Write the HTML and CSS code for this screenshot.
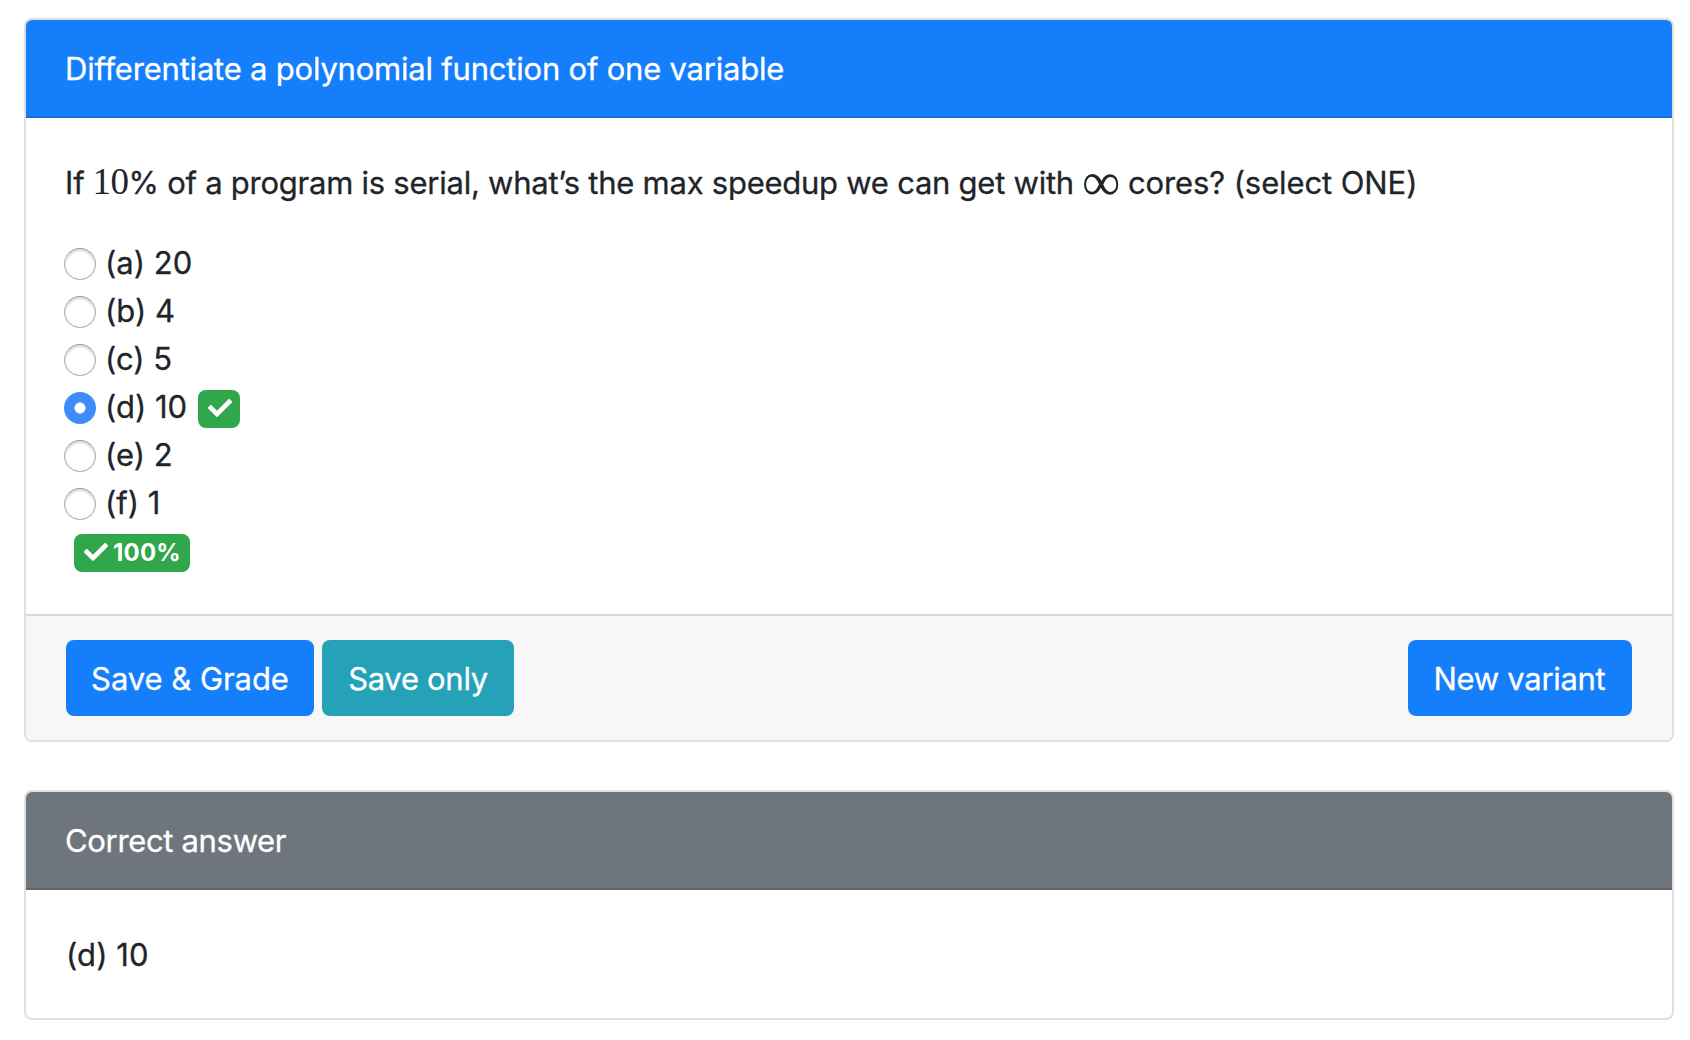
FILE: index.html
```html
<!DOCTYPE html>
<html lang="en">
<head>
<meta charset="utf-8">
<title>Differentiate a polynomial function of one variable</title>
<link rel="stylesheet" href="styles.css">
</head>
<body>
<main class="page">
  <section class="card">
    <header class="card-header primary"><span class="title">Differentiate a polynomial function of one variable</span></header>
    <div class="card-body">
      <p class="prompt">If <span class="math">10</span><span class="mid">% of a program is serial, what’s the max speedup we can get with</span><span class="math infinity">∞</span><span class="end">cores? (select ONE)</span></p>
      <div class="options">
        <label class="option"><input type="radio" name="answer"><span>(a) 20</span></label>
        <label class="option"><input type="radio" name="answer"><span>(b) 4</span></label>
        <label class="option"><input type="radio" name="answer"><span>(c) 5</span></label>
        <label class="option"><input type="radio" name="answer" checked><span>(d) 10</span>
          <span class="badge badge-mark"><svg class="check" viewBox="0 0 512 512"><path d="M173.898 439.404l-166.4-166.4c-9.997-9.997-9.997-26.206 0-36.204l36.203-36.204c9.997-9.998 26.207-9.998 36.204 0L192 312.69 432.095 72.596c9.997-9.997 26.207-9.997 36.204 0l36.203 36.204c9.997 9.997 9.997 26.206 0 36.204l-294.4 294.401c-9.998 9.997-26.207 9.997-36.204-.001z"/></svg></span></label>
        <label class="option"><input type="radio" name="answer"><span>(e) 2</span></label>
        <label class="option"><input type="radio" name="answer"><span>(f) 1</span></label>
      </div>
      <div class="score"><span class="badge badge-score"><svg class="check" viewBox="0 0 512 512"><path d="M173.898 439.404l-166.4-166.4c-9.997-9.997-9.997-26.206 0-36.204l36.203-36.204c9.997-9.998 26.207-9.998 36.204 0L192 312.69 432.095 72.596c9.997-9.997 26.207-9.997 36.204 0l36.203 36.204c9.997 9.997 9.997 26.206 0 36.204l-294.4 294.401c-9.998 9.997-26.207 9.997-36.204-.001z"/></svg><span>100%</span></span></div>
    </div>
    <footer class="card-footer">
      <button class="btn btn-grade">Save &amp; Grade</button>
      <button class="btn btn-save">Save only</button>
      <button class="btn btn-new">New variant</button>
    </footer>
  </section>
  <section class="card">
    <header class="card-header secondary"><span class="answer-title">Correct answer</span></header>
    <div class="card-body"><span class="answer">(d) 10</span></div>
  </section>
</main>
</body>
</html>
```
FILE: styles.css
```css
* { box-sizing: border-box; }
body {
  margin: 0;
  background: #fff;
  color: #212529;
  font: 400 31px/48px Inter, "Liberation Sans", sans-serif;
  -webkit-text-stroke: 0.3px currentColor;
}
.page {
  display: flex;
  flex-direction: column;
  gap: 48px;
  padding: 18px 16px 20px 24px;
}
.card {
  border: 2px solid #dfdfdf;
  border-radius: 8px;
  overflow: hidden;
}
.card-header {
  height: 98px;
  padding: 25px 39px 23px;
  border-bottom: 2px solid;
  color: #fff;
  white-space: nowrap;
}
.primary { background: #157efb; border-bottom-color: #136edb; }
.secondary { background: #6e757c; border-bottom-color: #60666c; }
.title { letter-spacing: -0.21px; }
.answer-title { letter-spacing: -0.33px; }
.answer { margin-left: 1px; letter-spacing: 0.1px; }
.card-body { padding: 41px 40px 39px 39px; }
.prompt { height: 48px; margin: 0 0 31px; white-space: nowrap; }
.math {
  margin-left: -1px;
  font-family: "Liberation Serif", serif;
  font-size: 37px;
  font-weight: 400;
  line-height: 1;
  letter-spacing: -0.5px;
  -webkit-text-stroke: 0;
}
.mid { letter-spacing: -0.25px; }
.end { letter-spacing: -0.1px; }
.infinity {
  display: inline-block;
  height: 36px;
  margin: 0 8px 0 8px;
  font-size: 54px;
  line-height: 36px;
  vertical-align: -6px;
}
.option {
  display: flex;
  align-items: center;
  height: 48px;
}
.option > span:first-of-type { padding-top: 2px; }
.option input {
  appearance: none;
  width: 32px;
  height: 32px;
  margin: 4px 9px 0 -1px;
  border: 1px solid #b0b0b0;
  border-top-color: #979797;
  border-radius: 50%;
  background: #fff;
  box-shadow: inset 0 2px 3px rgba(0, 0, 0, 0.16);
}
.option input:checked {
  border: 0;
  background: radial-gradient(circle, #fff 5px, #3d8bf8 6px);
  box-shadow: none;
}
.badge {
  display: inline-flex;
  align-items: center;
  height: 38px;
  border-radius: 8px;
  background: #30a74a;
  color: #fff;
  font-size: 24px;
  font-weight: 700;
  line-height: 38px;
  letter-spacing: 0.2px;
  -webkit-text-stroke: 0;
}
.check { width: 24px; height: 24px; fill: currentColor; }
.badge-mark { width: 42px; margin: 5px 0 0 11px; padding-left: 10px; }
.badge-mark .check { margin-top: -2px; }
.score { display: flex; height: 49px; padding: 9px 0 0 9px; }
.badge-score { width: 116px; margin-top: -1px; padding-left: 10px; gap: 5px; }
.badge-score .check { margin-top: -2px; }
.card-footer {
  display: flex;
  gap: 8px;
  height: 126px;
  padding: 24px 40px;
  border-top: 2px solid #d8d8d8;
  background: #f7f7f7;
}
.btn {
  height: 76px;
  margin: 0;
  padding: 1px 0 0;
  border: 0;
  border-radius: 8px;
  background: #157efb;
  color: #fff;
  font: inherit;
  letter-spacing: -0.3px;
  white-space: nowrap;
}
.btn-grade { width: 248px; letter-spacing: -0.05px; }
.btn-save { width: 192px; background: #26a2b8; }
.btn-new { width: 224px; margin-left: auto; padding-right: 1px; }
```
